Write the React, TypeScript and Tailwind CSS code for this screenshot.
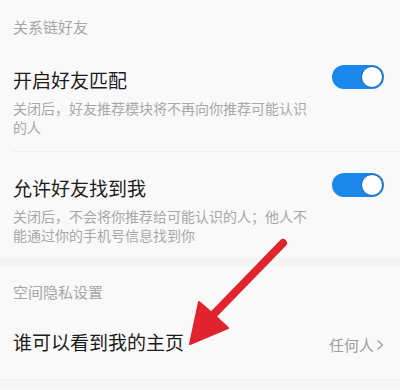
const font = { fontFamily: '"Noto Sans CJK SC", "Noto Sans", sans-serif' };

function Toggle() {
  return (
    <div className="relative flex h-[24px] w-[52px] shrink-0 items-center justify-end rounded-full bg-[#1a88ea] pr-[1px]">
      <div className="h-[22px] w-[22px] rounded-full border-[1.5px] border-[#1466b8] bg-white" />
    </div>
  );
}

function SwitchItem({ title, desc }: { title: string; desc: string }) {
  return (
    <div className="flex items-start justify-between pl-[13px] pr-[16px]">
      <div className="flex w-[305px] flex-col">
        <div className="text-[19px] leading-[26px] text-[#1c1c1c]">{title}</div>
        <div className="mt-[6px] text-[14px] leading-[19px] text-[#a8a8a8]">{desc}</div>
      </div>
      <div className="mt-[-2px]">
        <Toggle />
      </div>
    </div>
  );
}

export default function App() {
  return (
    <div className="relative h-[390px] w-[400px] overflow-hidden bg-[#f9f9f9]" style={font}>
      {/* 关系链好友 */}
      <div className="px-[13px] pt-[17px] text-[15px] leading-[20px] text-[#a6a6a6]">关系链好友</div>

      <div className="pt-[30px] pb-[14px]">
        <SwitchItem title="开启好友匹配" desc="关闭后，好友推荐模块将不再向你推荐可能认识的人" />
      </div>
      <div className="ml-[13px] border-t border-[#eeeeee]" />

      <div className="pt-[23px] pb-[12px]">
        <SwitchItem title="允许好友找到我" desc="关闭后，不会将你推荐给可能认识的人；他人不能通过你的手机号信息找到你" />
      </div>

      <div className="h-[10px] bg-[#f4f4f4]" />

      {/* 空间隐私设置 */}
      <div className="px-[13px] pt-[15px] text-[15px] leading-[20px] text-[#a6a6a6]">空间隐私设置</div>

      <div className="flex items-center justify-between pl-[13px] pr-[16px] pt-[27px] pb-[24px]">
        <div className="text-[19px] leading-[26px] text-[#1c1c1c]">谁可以看到我的主页</div>
        <div className="mt-[6px] flex items-center gap-[2px] text-[15px] leading-[20px] text-[#9e9e9e]">
          <span>任何人</span>
          <svg width="8" height="12" viewBox="0 0 8 12" fill="none">
            <path d="M1.5 1.5 L6.5 6 L1.5 10.5" stroke="#a0a0a0" strokeWidth="1.3" />
          </svg>
        </div>
      </div>
      <div className="h-[10px] border-t border-[#efefef] bg-[#f5f5f5]" />

      {/* red arrow annotation */}
      <svg className="absolute left-0 top-0" width="400" height="390" viewBox="0 0 400 390">
        <line x1="283" y1="243" x2="212" y2="316" stroke="#e0232d" strokeWidth="8" strokeLinecap="round" />
        <polygon points="190,344 199,302 213,314 228,328" fill="#e0232d" stroke="#e0232d" strokeWidth="2" strokeLinejoin="round" />
      </svg>
    </div>
  );
}
